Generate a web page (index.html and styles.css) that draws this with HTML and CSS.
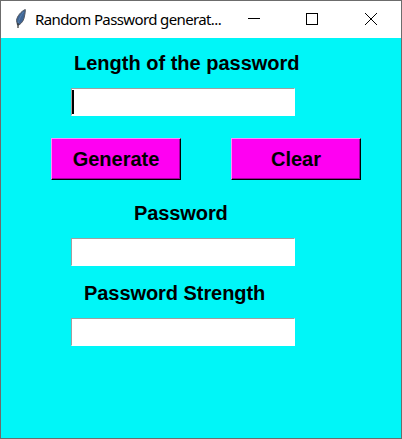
FILE: index.html
```html
<!DOCTYPE html>
<html lang="en">
<head>
<meta charset="utf-8">
<title>Random Password generator</title>
<link rel="stylesheet" href="styles.css">
</head>
<body>
<div class="window">
  <header class="titlebar">
    <svg class="feather" width="12" height="20" viewBox="0 0 12 20">
      <path d="M10.3 .5C6.500 2 2 7 1.500 11.500L2.500 16H4C7 14 9 11 9.500 7C10 4.500 10.500 2.500 10.300 .5Z" fill="#3e6595" stroke="#50565f" stroke-width="1"/>
      <path d="M8.500 3C6 6 4 10 3.300 15" fill="none" stroke="#587fac" stroke-width="1"/>
      <path d="M3 14V19" stroke="#333" stroke-width="1.200"/>
    </svg>
    <span class="title">Random Password generat...</span>
    <svg class="controls" width="132" height="14" viewBox="0 0 132 14" shape-rendering="crispEdges" fill="none" stroke="#000">
      <path d="M1 6.500H13"/>
      <rect x="59.500" y="1.500" width="11" height="11"/>
      <path d="M118 1L130 13M130 1L118 13" shape-rendering="auto"/>
    </svg>
  </header>
  <main class="form">
    <label class="label label-length">Length of the password</label>
    <div class="entry"><span class="caret"></span></div>
    <div class="buttons">
      <button class="button">Generate</button>
      <button class="button">Clear</button>
    </div>
    <label class="label label-password">Password</label>
    <div class="entry"></div>
    <label class="label label-strength">Password Strength</label>
    <div class="entry"></div>
  </main>
</div>
</body>
</html>
```
FILE: styles.css
```css
* { box-sizing: border-box; }
body { margin: 0; }
.window {
  width: 402px;
  height: 439px;
  border: 1px solid #6c6c6c;
  background: #00f6f8;
  overflow: hidden;
}
.titlebar {
  display: flex;
  align-items: center;
  height: 37px;
  padding-left: 14px;
  background: #fff;
}
.feather { flex: none; margin-top: -2px; }
.title {
  width: 212px;
  margin: -2px 0 0 8px;
  font: 15px/20px "Noto Sans", "Open Sans", sans-serif;
  letter-spacing: -0.62px;
  white-space: nowrap;
  color: #000;
}
.controls { flex: none; margin-top: -1px; }
.form {
  display: flex;
  flex-direction: column;
  align-items: flex-start;
  padding: 10px 0 0 70px;
}
.label, .button {
  font: bold 20px/30px "Liberation Sans", Arial, sans-serif;
  color: #000;
}
.label { height: 30px; margin-bottom: 10px; white-space: nowrap; }
.label-length { margin-left: 3px; }
.label-password { margin-left: 63px; letter-spacing: -0.1px; }
.label-strength { margin-left: 13px; letter-spacing: -0.06px; }
.entry {
  width: 224px;
  height: 28px;
  margin-bottom: 12px;
  padding: 1px 0 0;
  border: 1px solid #fff;
  border-top-color: #a0a0a0;
  border-left-color: #a0a0a0;
  background: #fff;
}
.caret {
  display: block;
  width: 2px;
  height: 24px;
  background: #000;
}
.buttons {
  display: flex;
  gap: 50px;
  margin: 10px 0 18px -20px;
}
.button {
  width: 130px;
  height: 42px;
  padding: 0;
  border: 1px solid #000;
  border-top-color: #ff8cf8;
  border-left-color: #ff8cf8;
  border-radius: 0;
  background: #ff00f2;
  box-shadow: inset -1px -1px #a000a0;
}
```
